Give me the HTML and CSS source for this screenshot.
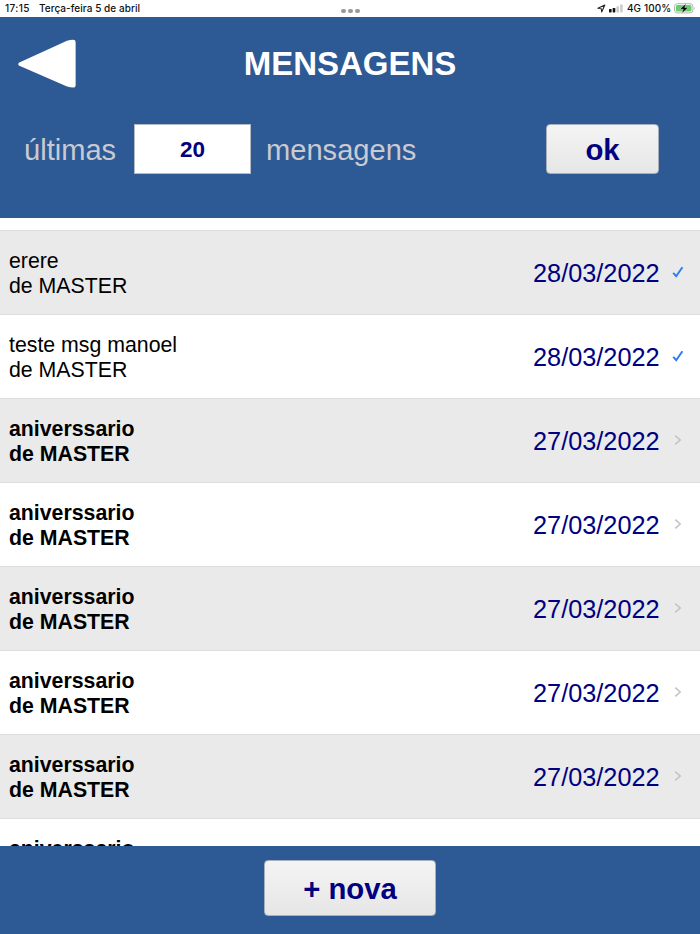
FILE: index.html
```html
<!DOCTYPE html>
<html lang="pt-BR">
<head>
<meta charset="utf-8">
<title>Mensagens</title>
<link rel="stylesheet" href="styles.css">
</head>
<body>
<div class="status">
  <span class="time">17:15</span><span class="day">Terça-feira 5 de abril</span>
  <span class="dots"><i></i><i></i><i></i></span>
  <svg class="loc" viewBox="0 0 9 9"><path d="M.9 4.3 7.8 1 4.7 8 4.3 4.7Z" fill="none" stroke="#222" stroke-width="1.1" stroke-linejoin="round"/></svg>
  <svg class="signal" viewBox="0 0 14 9"><rect x="0" y="5" width="2.6" height="3.4" rx=".6" fill="#111"/><rect x="3.7" y="4" width="2.6" height="4.4" rx=".6" fill="#111"/><rect x="7.4" y="2.2" width="2.6" height="6.2" rx=".6" fill="#ccc"/><rect x="11.1" y=".6" width="2.6" height="7.8" rx=".6" fill="#ccc"/></svg>
  <span class="net">4G</span><span class="pct">100%</span>
  <svg class="battery" viewBox="0 0 22 11"><rect x=".5" y=".7" width="18.4" height="9.2" rx="2.8" fill="#fff" stroke="#aaa" stroke-width=".9"/><rect x="1.9" y="2" width="15.6" height="6.6" rx="1.5" fill="#65cf69"/><path d="M20 3.6q1.5 1.7 0 3.4Z" fill="#aaa"/><path d="M12.2.4 5.8 6.2h3.5L7.6 10.6l6.6-6h-3.5Z" fill="#000" stroke="#fff" stroke-width=".4"/></svg>
</div>
<header class="header">
  <div class="titlebar">
    <svg class="back" viewBox="0 0 60 50"><path d="M1.8 26.6Q.6 25.2 1.8 23.8L50 1.8Q53 .8 56 .8Q58.6.8 58.6 3V46.4Q58.6 48.6 56 48.6Q53 48.6 50 47.6Z" fill="#fff"/></svg>
    <h1>MENSAGENS</h1>
  </div>
  <div class="filter">
    <span class="last">últimas</span>
    <span class="count">20</span>
    <span class="unit">mensagens</span>
    <button class="btn ok">ok</button>
  </div>
</header>
<main class="list">
  <div class="row"><div class="msg">erere<br>de MASTER</div><time>28/03/2022</time><svg class="mark" viewBox="0 0 12 14"><path d="M1.2 7.8 4.2 11.2 10.4 2.2" class="check"/></svg></div>
  <div class="row"><div class="msg">teste msg manoel<br>de MASTER</div><time>28/03/2022</time><svg class="mark" viewBox="0 0 12 14"><path d="M1.2 7.8 4.2 11.2 10.4 2.2" class="check"/></svg></div>
  <div class="row unread"><div class="msg">aniverssario<br>de MASTER</div><time>27/03/2022</time><svg class="mark" viewBox="0 0 12 14"><path d="M3.2 2.6 8.2 7 3.2 11.4" class="chevron"/></svg></div>
  <div class="row unread"><div class="msg">aniverssario<br>de MASTER</div><time>27/03/2022</time><svg class="mark" viewBox="0 0 12 14"><path d="M3.2 2.6 8.2 7 3.2 11.4" class="chevron"/></svg></div>
  <div class="row unread"><div class="msg">aniverssario<br>de MASTER</div><time>27/03/2022</time><svg class="mark" viewBox="0 0 12 14"><path d="M3.2 2.6 8.2 7 3.2 11.4" class="chevron"/></svg></div>
  <div class="row unread"><div class="msg">aniverssario<br>de MASTER</div><time>27/03/2022</time><svg class="mark" viewBox="0 0 12 14"><path d="M3.2 2.6 8.2 7 3.2 11.4" class="chevron"/></svg></div>
  <div class="row unread"><div class="msg">aniverssario<br>de MASTER</div><time>27/03/2022</time><svg class="mark" viewBox="0 0 12 14"><path d="M3.2 2.6 8.2 7 3.2 11.4" class="chevron"/></svg></div>
  <div class="row unread"><div class="msg">aniverssario</div></div>
</main>
<footer class="footer"><button class="btn new">+ nova</button></footer>
</body>
</html>
```
FILE: styles.css
```css
* { box-sizing: border-box; }
body {
  margin: 0;
  height: 934px;
  overflow: hidden;
  display: flex;
  flex-direction: column;
  background: #fff;
  font-family: "Liberation Sans", Arial, sans-serif;
}
svg { display: block; flex: none; }
.status {
  flex: none;
  height: 17px;
  display: flex;
  align-items: center;
  padding-left: 5px;
  font: 500 10px/17px Inter, sans-serif;
  color: #111;
  white-space: nowrap;
}
.time { width: 34px; letter-spacing: .4px; }
.day { width: 302px; letter-spacing: .05px; }
.dots { display: flex; gap: 2.4px; width: 256px; padding-top: 5px; }
.dots i { width: 4.6px; height: 4.6px; border-radius: 50%; background: #999; }
.loc { width: 9px; height: 9px; margin-right: 3px; }
.signal { width: 14px; height: 9px; margin-right: 4px; }
.net { width: 17px; }
.pct { width: 30px; letter-spacing: .1px; }
.battery { width: 22px; height: 11px; }

.header { flex: none; height: 201px; background: #2d5994; }
.titlebar {
  height: 94px;
  display: grid;
  grid-template-columns: 60px 1fr 60px;
  align-items: center;
  padding: 0 17px;
}
.back { width: 60px; height: 50px; }
h1 { margin: 0; font-size: 33px; line-height: 38px; text-align: center; color: #fff; }
.filter {
  display: flex;
  align-items: center;
  height: 50px;
  margin-top: 13px;
  padding: 0 41px 0 24px;
  font-size: 29.1px;
  color: #c9cad2;
}
.last { width: 110px; padding-top: 2px; }
.count {
  width: 117px;
  height: 50px;
  border: 1px solid #b5bac4;
  background: #fff;
  color: #000080;
  font-weight: bold;
  font-size: 22.5px;
  line-height: 49px;
  text-align: center;
}
.unit { margin-left: 15px; flex: 1; padding-top: 2px; }
.btn {
  display: block;
  padding: 2px 0 0;
  border: 1px solid #a9afba;
  border-radius: 4px;
  background: linear-gradient(#f4f4f4, #e6e6e6);
  color: #000080;
  font: bold 29.3px "Liberation Sans", Arial, sans-serif;
}
.ok { width: 113px; height: 50px; }

.list { height: 628px; flex: none; padding-top: 12px; overflow: hidden; }
.row {
  height: 84px;
  display: flex;
  align-items: center;
  padding: 2px 16px 0 9px;
  border-top: 1px solid #dedede;
}
.row:nth-child(odd) { background: #eaeaea; }
.msg { flex: 1; font-size: 21.3px; line-height: 25px; padding-top: 1px; }
.unread .msg { font-weight: bold; }
.row:last-child { align-items: flex-start; padding-top: 17px; }
time { color: #000080; font-size: 25.3px; width: 139px; }
.mark { width: 12px; height: 14px; margin-bottom: 3px; }
.check { fill: none; stroke: #2e7cf6; stroke-width: 2; }
.chevron { fill: none; stroke: #c4c4c6; stroke-width: 1.6; }

.footer {
  flex: 1;
  display: flex;
  justify-content: center;
  align-items: flex-start;
  padding-top: 14px;
  background: #2d5994;
}
.new { width: 172px; height: 56px; }
```
